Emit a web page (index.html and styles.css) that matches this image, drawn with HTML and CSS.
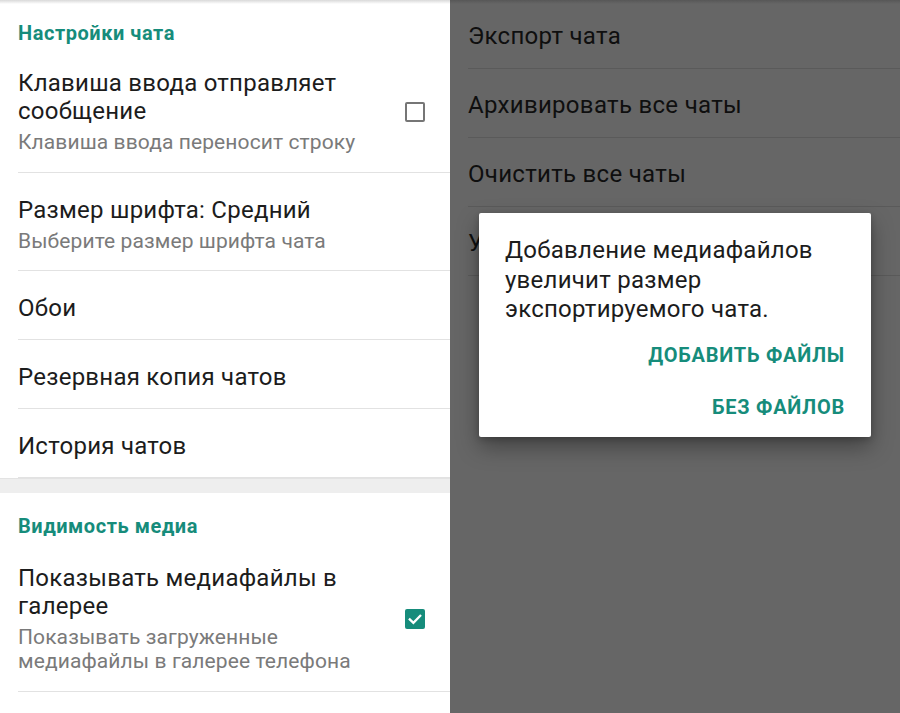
FILE: index.html
```html
<!DOCTYPE html>
<html lang="ru">
<head>
<meta charset="utf-8">
<title>Настройки чата</title>
<link rel="stylesheet" href="styles.css">
</head>
<body>
<div class="screen">
  <section class="panel panel-left">
    <div class="group-header">Настройки чата</div>
    <div class="item item-two item-first">
      <div class="item-text">
        <div class="item-title">Клавиша ввода отправляет сообщение</div>
        <div class="item-sub">Клавиша ввода переносит строку</div>
      </div>
      <span class="checkbox"></span>
    </div>
    <div class="item item-two">
      <div class="item-text">
        <div class="item-title">Размер шрифта: Средний</div>
        <div class="item-sub">Выберите размер шрифта чата</div>
      </div>
    </div>
    <div class="item item-one"><div class="item-title">Обои</div></div>
    <div class="item item-one"><div class="item-title">Резервная копия чатов</div></div>
    <div class="item item-one"><div class="item-title">История чатов</div></div>
    <div class="group-gap"></div>
    <div class="group-header group-header-second">Видимость медиа</div>
    <div class="item item-two item-media">
      <div class="item-text">
        <div class="item-title">Показывать медиафайлы в галерее</div>
        <div class="item-sub">Показывать загруженные медиафайлы в галерее телефона</div>
      </div>
      <span class="checkbox checkbox-on">
        <svg viewBox="0 0 20 20" width="20" height="20"><path d="M4.8 10.4 L8.4 13.8 L15.2 6.8" fill="none" stroke="#fff" stroke-width="2.3" stroke-linecap="square"/></svg>
      </span>
    </div>
  </section>
  <section class="panel panel-right">
    <div class="ritem">Экспорт чата</div>
    <div class="ritem">Архивировать все чаты</div>
    <div class="ritem">Очистить все чаты</div>
    <div class="ritem">Удалить все чаты</div>
    <div class="dialog">
      <p class="dialog-text">Добавление медиафайлов увеличит размер экспортируемого чата.</p>
      <div class="dialog-actions">
        <div class="dialog-btn">ДОБАВИТЬ ФАЙЛЫ</div>
        <div class="dialog-btn">БЕЗ ФАЙЛОВ</div>
      </div>
    </div>
  </section>
</div>
</body>
</html>
```
FILE: styles.css
```css
* { box-sizing: border-box; }
html, body { margin: 0; padding: 0; }
body {
  font-family: Roboto, "Noto Sans", "Liberation Sans", sans-serif;
  width: 900px;
  height: 713px;
  overflow: hidden;
  background: #fff;
}
.screen {
  display: flex;
  height: 713px;
}
.panel {
  height: 713px;
  display: flex;
  flex-direction: column;
}
.panel-left {
  width: 450px;
  background: linear-gradient(#d9d9d9, #fff 4px) no-repeat;
}
.panel-right {
  width: 450px;
  position: relative;
  background: linear-gradient(#575757, #666 4px) #666 no-repeat;
}

.group-header {
  padding: 22px 18px 2px;
  line-height: 22px;
  height: 46px;
  font-size: 20px;
  font-weight: 700;
  letter-spacing: 0.55px;
  color: #168c7b;
}
.group-gap {
  height: 15px;
  background: #eeeeee;
  border-top: 1px solid #e3e3e3;
}
.item {
  margin-left: 18px;
  border-bottom: 1px solid #e2e2e2;
  display: flex;
  align-items: center;
  gap: 20px;
  padding-right: 25px;
}
.item-two { padding-top: 23px; padding-bottom: 17px; }
.item-first { padding-bottom: 18px; }
.item-media { padding-top: 25px; padding-bottom: 18px; }
.item-one { height: 69px; padding-top: 23px; padding-bottom: 17px; align-items: flex-start; }
.item-text { flex: 1; min-width: 0; }
.item-title {
  font-size: 24px;
  line-height: 28px;
  letter-spacing: 0.25px;
  color: #1c1c1c;
}
.item-sub {
  margin-top: 5px;
  font-size: 21px;
  line-height: 24px;
  letter-spacing: 0.1px;
  color: #7a7a7a;
}
.checkbox {
  width: 20px;
  height: 20px;
  flex: none;
  border: 2px solid #767676;
  border-radius: 2px;
  display: flex;
}
.checkbox-on {
  border: none;
  background: #168c7b;
}

.ritem {
  margin-left: 18px;
  height: 69px;
  padding-top: 22px;
  border-bottom: 1px solid #5a5a5a;
  font-size: 24px;
  line-height: 28px;
  letter-spacing: 0.3px;
  color: #0f0f0f;
  white-space: nowrap;
}
.dialog {
  position: absolute;
  left: 29px;
  top: 213px;
  width: 392px;
  height: 224px;
  background: #fff;
  border-radius: 2px;
  box-shadow: 0 10px 22px rgba(0,0,0,0.35), 0 2px 6px rgba(0,0,0,0.2);
  padding: 23px 26px 4px;
  display: flex;
  flex-direction: column;
}
.dialog-text {
  margin: 0;
  font-size: 24px;
  line-height: 29.5px;
  letter-spacing: 0.25px;
  color: #1c1c1c;
}
.dialog-actions {
  margin-top: 4px;
  display: flex;
  flex-direction: column;
  align-items: flex-end;
}
.dialog-btn {
  height: 52px;
  line-height: 52px;
  font-size: 20px;
  font-weight: 700;
  letter-spacing: 0.75px;
  color: #168c7b;
  margin-right: 0;
}
```
